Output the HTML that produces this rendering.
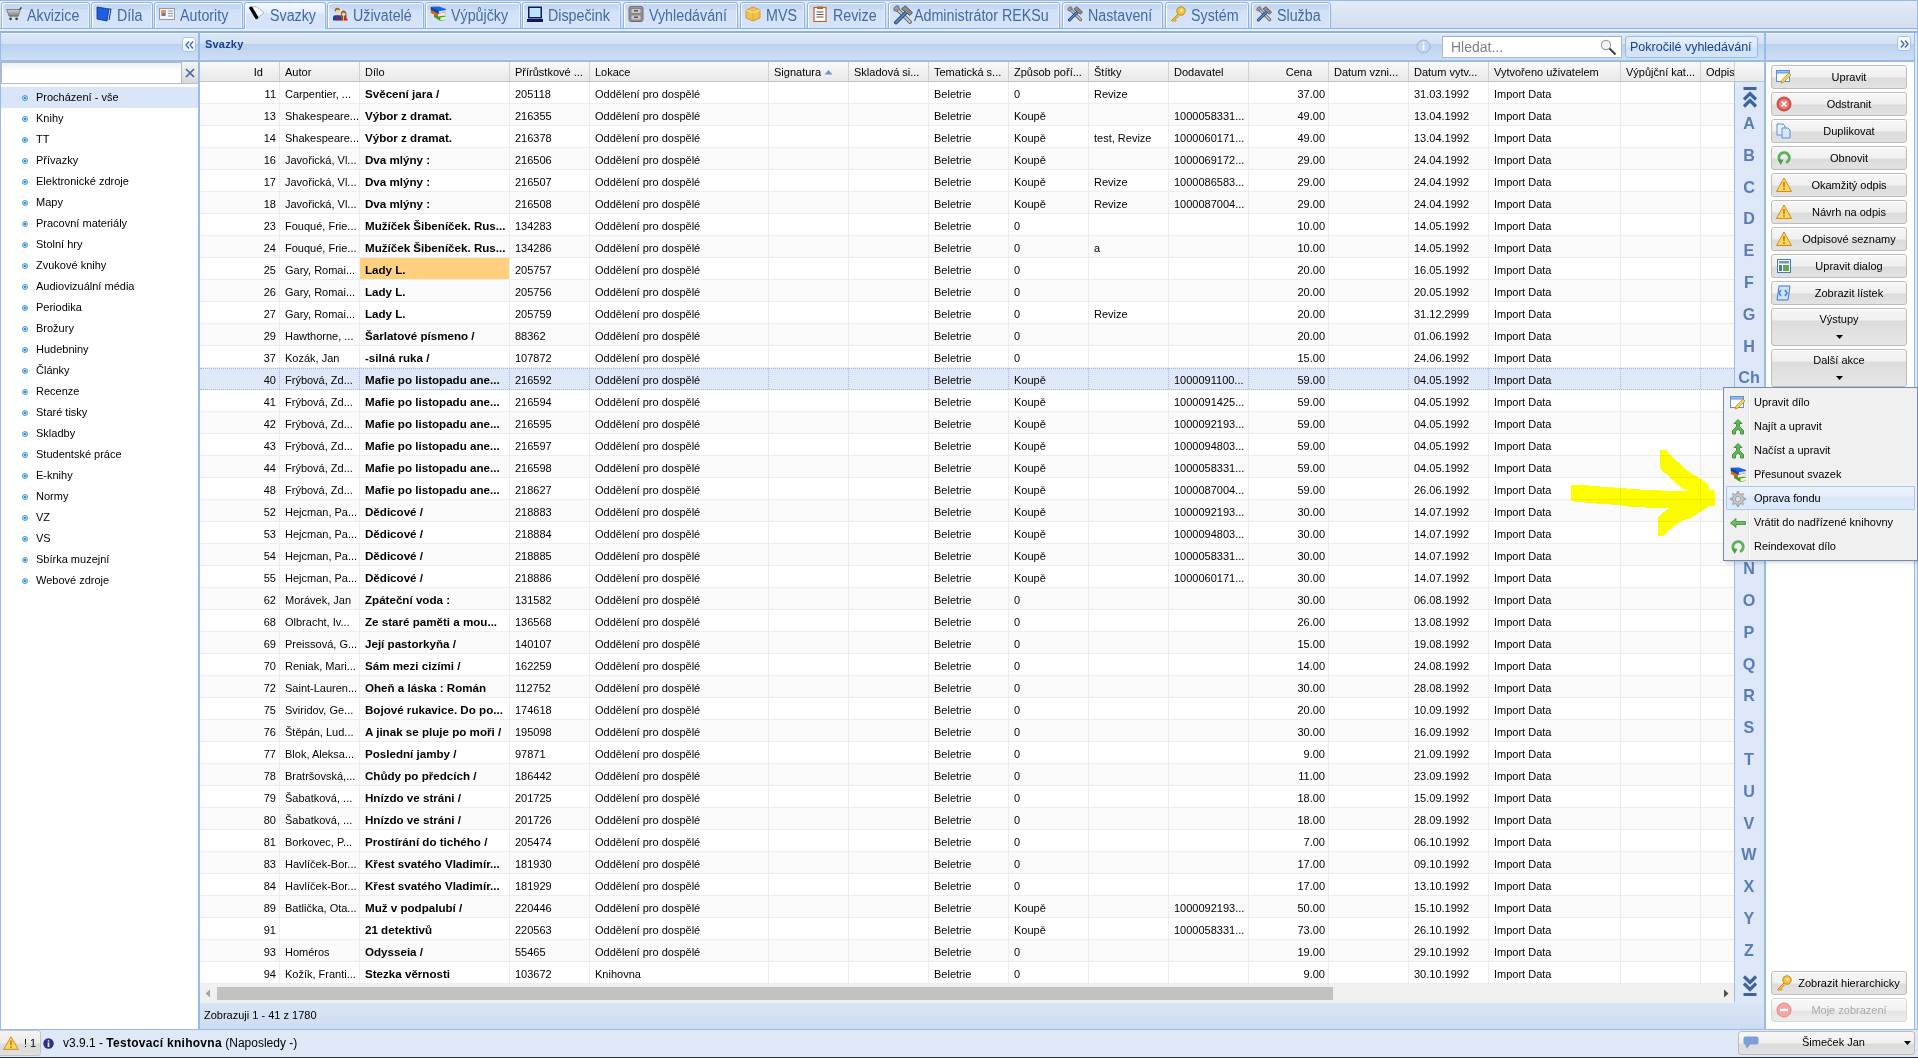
<!DOCTYPE html><html><head><meta charset="utf-8"><title>Svazky</title><style>
*{box-sizing:border-box}
html,body{margin:0;padding:0}
body{width:1918px;height:1058px;overflow:hidden;position:relative;background:#dfe8f6;font-family:"Liberation Sans",sans-serif;font-size:11px;color:#000}
.a{position:absolute}
.t{position:absolute;white-space:nowrap;line-height:13px}
/* tab bar */
#tabbar{left:0;top:0;width:1918px;height:31px;background:linear-gradient(#e3ebf7,#cfdcee);border-top:1px solid #99bbe8}
.tab{position:absolute;top:2px;height:27px;border:1px solid #8db2e3;border-radius:3px 3px 0 0;background:linear-gradient(#c3d6f1 0,#c7d9f2 6px,#d2e1f7 7px,#d6e4f9 100%);box-shadow:inset 1px 1px 0 #fff,inset -1px 0 0 #e9f1fc}
.tab.act{border-bottom:none;background:linear-gradient(#f4f8fe 0,#e3edfb 10px,#d6e4f9 11px,#d6e4f9 100%)}
.tab .tx{position:absolute;left:25px;top:4px;font-size:15.6px;line-height:18px;color:#416aa3;white-space:nowrap;transform:scaleX(0.915);transform-origin:0 0}
.tab svg{position:absolute;left:4px;top:3px}
#strip{left:0;top:28px;width:1918px;height:5px;background:#e6eefa;border-top:1px solid #8db2e3;border-bottom:2px solid #8db2e3}
/* panels */
.phdr{position:absolute;height:29px;border-top:1px solid #f3f7fc;border-bottom:2px solid #99bbe8;background:linear-gradient(#dce8f6 0,#d3e1f3 10px,#b3ccee 10px,#bcd2f0 11px,#cddff5 100%)}
.pborder{position:absolute;background:#99bbe8}
.gh{position:absolute;top:62px;height:20px;background:linear-gradient(#fafafa,#f0f0f0 50%,#e9e9e9);border-bottom:1px solid #c5c5c5}
.ghc{position:absolute;top:0;height:19px;border-right:1px solid #d0d0d0;padding:0 0 0 5px;line-height:21px;white-space:nowrap;overflow:hidden;color:#000}
.row{position:absolute;left:200px;width:1534px;height:22px;border-bottom:1px solid #ededed;background:#fff}
.row.alt{background:#fafafa}
.row.sel{background:#dfe8f6;border-top:1px dotted #a3bae9;border-bottom:1px dotted #a3bae9}
.c{position:absolute;top:0;height:21px;border-right:1px solid #ededed;line-height:24px;padding-left:5px;white-space:nowrap;overflow:hidden}
.row.sel .c{border-right:1px dotted #a3bae9;top:-1px}
.c.r{text-align:right;padding:0 3px 0 0}
.c.b{font-weight:bold;font-size:11.6px}
.btn{position:absolute;left:1771px;width:136px;height:24px;border:1px solid #bcbcbc;border-radius:3px;background:linear-gradient(#f6f6f6 0,#f0f0f0 11px,#dcdcdc 12px,#e2e2e2 100%);box-shadow:inset 0 1px 0 #fff}
.btn .bt{position:absolute;left:0;width:100%;text-align:center;top:5px;line-height:13px;padding-left:20px;white-space:nowrap}
.btn svg{position:absolute;left:4px;top:3px}
.tree{position:absolute;left:36px;line-height:13px;white-space:nowrap}
.bul{position:absolute;left:22px;width:6px;height:6px;border-radius:50%;background:radial-gradient(circle,#3f8fcf 0,#3f8fcf 1px,#b5dcf6 1.5px,#a8d5f4 2px);border:1px solid #4d9fd9}
.idx{position:absolute;left:1734px;width:30px;text-align:center;font-family:"Liberation Sans",sans-serif;font-weight:bold;font-size:17px;line-height:14px;color:#5a7db3;transform:scaleX(0.95)}
.mi{position:absolute;left:1754px;line-height:13px;white-space:nowrap}
.mico{position:absolute;left:1730px}
</style></head><body>
<div id="tabbar" class="a"></div>
<div id="strip" class="a"></div>
<div class="tab" style="left:1px;width:89px"><svg width="16" height="16" viewBox="0 0 16 16"><defs><linearGradient id="cg" x1="0" y1="0" x2="0" y2="1"><stop offset="0" stop-color="#d6d6d6"/><stop offset="1" stop-color="#7d7d7d"/></linearGradient></defs><path d="M0.5 3.5H14.2L12.2 10.2H3.2z" fill="url(#cg)" stroke="#6a6a6a" stroke-width="0.8"/><path d="M13.6 3.8L15.6 1.2" stroke="#555" stroke-width="1.6"/><circle cx="4.6" cy="12.8" r="1.4" fill="#444"/><circle cx="10.6" cy="12.8" r="1.4" fill="#444"/></svg><span class="tx">Akvizice</span></div>
<div class="tab" style="left:91px;width:62px"><svg width="16" height="16" viewBox="0 0 16 16"><path d="M1 1l12 2-2 12-10-2z" fill="#1d5fe0" stroke="#0a2f8a" stroke-width="0.8"/><path d="M13 3l2 0-2 11" fill="none" stroke="#0a2f8a" stroke-width="1"/></svg><span class="tx">Díla</span></div>
<div class="tab" style="left:154px;width:89px"><svg width="16" height="16" viewBox="0 0 16 16"><rect x="0.5" y="2.5" width="15" height="11" fill="#f4f4f4" stroke="#9a9a9a"/><rect x="2" y="4" width="5" height="6" fill="#e79a5c"/><rect x="3" y="7" width="3" height="3" fill="#4a7fc1"/><path d="M9 5h5M9 7.5h5M9 10h5" stroke="#7a9cc6" stroke-width="1.2"/></svg><span class="tx">Autority</span></div>
<div class="tab act" style="left:244px;width:82px"><svg width="16" height="16" viewBox="0 0 16 16"><path d="M3.5 0.7H7.5L15.3 6.5 7.8 12.6" fill="#f4f7fb" stroke="#8a8a8a" stroke-width="0.9" stroke-dasharray="1.2 0.8"/><path d="M2 2.2L7.6 11.4" stroke="#000" stroke-width="3.4" stroke-linecap="round"/></svg><span class="tx">Svazky</span></div>
<div class="tab" style="left:327px;width:97px"><svg width="16" height="16" viewBox="0 0 16 16"><path d="M1 14.5V11.5Q1 9.2 3.2 9.2H7.8Q9.2 9.5 9.4 11.5V14.5z" fill="#1242b0"/><path d="M4.6 9.2h1.1l.3 5.3H4.3z" fill="#c21b1b"/><circle cx="5.2" cy="5.6" r="2.3" fill="#f5d7a6"/><path d="M2.6 5.2Q2.4 1.6 5.4 1.7 8.4 1.9 7.9 5 7.2 3.6 5.6 3.8 4 3.9 3.4 5.6z" fill="#9b6a1d"/><path d="M8.6 14.5L9.2 12.2Q9.8 11 11.5 11 13.6 11 15.6 13.2V14.5z" fill="#d21f1f"/><path d="M8.7 12.2Q8.1 4.6 11.6 4.6 15.1 4.6 14.5 12.2z" fill="#8c5a16"/><circle cx="11.6" cy="8.3" r="1.8" fill="#f5d7a6"/><path d="M11.2 10h.8v4.5h-.8z" fill="#f5d7a6"/></svg><span class="tx">Uživatelé</span></div>
<div class="tab" style="left:425px;width:96px"><svg width="16" height="16" viewBox="0 0 16 16"><path d="M4 8.2L17 10.2V13.6L10.4 15 4 11z" fill="#3f9f1f"/><path d="M10.4 11.4L16.6 10.4V13.4L10.4 14.6z" fill="#e4f6d2"/><path d="M0.8 4L15.2 5.6V9.2L8 10.6 0.8 7z" fill="#e2620d"/><path d="M8 7.6L15 6.6V9.4L8 10.5z" fill="#fde4d0"/><path d="M0.8 0.8L9 0.6 16.2 3V5.4L8.6 7.8 0.8 3.8z" fill="#1b62dc"/><path d="M8.6 5.2L16 4V6L8.6 7.6z" fill="#c6ddff"/><path d="M0.8 0.8L8.6 5.2V7.8L0.8 3.8z" fill="#0f46a8"/></svg><span class="tx">Výpůjčky</span></div>
<div class="tab" style="left:522px;width:99px"><svg width="16" height="16" viewBox="0 0 16 16"><rect x="1" y="0.5" width="14" height="12" fill="#0d1a5e"/><rect x="2.5" y="2" width="11" height="9" fill="#bfe3fb"/><rect x="0" y="13" width="16" height="3" fill="#0d1a5e"/></svg><span class="tx">Dispečink</span></div>
<div class="tab" style="left:623px;width:115px"><svg width="16" height="16" viewBox="0 0 16 16"><rect x="1" y="0.5" width="14" height="15" rx="2" fill="#9d9d9d" stroke="#6f6f6f"/><rect x="3" y="2.5" width="10" height="5" fill="#c9c9c9" stroke="#6f6f6f" stroke-width="0.7"/><rect x="3" y="9" width="10" height="5" fill="#c9c9c9" stroke="#6f6f6f" stroke-width="0.7"/><rect x="6" y="4" width="4" height="1.5" fill="#555"/><rect x="6" y="10.5" width="4" height="1.5" fill="#555"/></svg><span class="tx">Vyhledávání</span></div>
<div class="tab" style="left:740px;width:65px"><svg width="16" height="16" viewBox="0 0 16 16"><path d="M8 1l7 3v8l-7 3-7-3V4z" fill="#f1c24a" stroke="#c98d16" stroke-width="0.8"/><path d="M1 4l7 3 7-3" fill="none" stroke="#fbe7a8" stroke-width="1"/><path d="M8 7v8" stroke="#d9a22a" stroke-width="0.8"/></svg><span class="tx">MVS</span></div>
<div class="tab" style="left:807px;width:79px"><svg width="16" height="16" viewBox="0 0 16 16"><rect x="2" y="1.5" width="12" height="14" fill="#fff" stroke="#c0602a" stroke-width="1.2"/><rect x="5" y="0.5" width="6" height="2.5" fill="#c0602a"/><path d="M4.5 6h7M4.5 8.5h7M4.5 11h7" stroke="#555" stroke-width="1"/></svg><span class="tx">Revize</span></div>
<div class="tab" style="left:888px;width:172px"><svg width="20" height="20" viewBox="0 0 20 20" style="top:2px;left:4px"><path d="M5 5L17 17" stroke="#5e5e5e" stroke-width="3.8" stroke-linecap="round"/><path d="M5 5L17 17" stroke="#c9c9c9" stroke-width="1.8" stroke-linecap="round"/><path d="M0.8 5.2A4.5 4.5 0 0 1 5.2 0.8L6.5 3.6 3.6 6.5z" fill="#9a9a9a" stroke="#5e5e5e" stroke-width="0.8"/><path d="M14 6.5L3 17.5" stroke="#1f3f73" stroke-width="3.8" stroke-linecap="round"/><path d="M14 6.5L3 17.5" stroke="#5a8ccc" stroke-width="1.8" stroke-linecap="round"/><path d="M8.5 4L12.2 0.8 19.5 7.6 16.8 10.4z" fill="#8a8a8a" stroke="#3f3f3f" stroke-width="0.8"/></svg><span class="tx">Administrátor REKSu</span></div>
<div class="tab" style="left:1062px;width:101px"><svg width="16" height="16" viewBox="0 0 20 20"><path d="M5 5L17 17" stroke="#5e5e5e" stroke-width="3.8" stroke-linecap="round"/><path d="M5 5L17 17" stroke="#c9c9c9" stroke-width="1.8" stroke-linecap="round"/><path d="M0.8 5.2A4.5 4.5 0 0 1 5.2 0.8L6.5 3.6 3.6 6.5z" fill="#9a9a9a" stroke="#5e5e5e" stroke-width="0.8"/><path d="M14 6.5L3 17.5" stroke="#1f3f73" stroke-width="3.8" stroke-linecap="round"/><path d="M14 6.5L3 17.5" stroke="#5a8ccc" stroke-width="1.8" stroke-linecap="round"/><path d="M8.5 4L12.2 0.8 19.5 7.6 16.8 10.4z" fill="#8a8a8a" stroke="#3f3f3f" stroke-width="0.8"/><path d="M14.5 3.5l2 2" stroke="#c33" stroke-width="1"/></svg><span class="tx">Nastavení</span></div>
<div class="tab" style="left:1165px;width:84px"><svg width="16" height="16" viewBox="0 0 16 16"><circle cx="11" cy="5" r="4.2" fill="#f3c543" stroke="#c48a10" stroke-width="1"/><circle cx="11.5" cy="4.5" r="1.2" fill="#fff6c8"/><path d="M8 8L1.5 14.5l1.5 1 1-1 1 1 1.2-1.2-1-1 3.5-3.5" fill="#f3c543" stroke="#c48a10" stroke-width="1"/></svg><span class="tx">Systém</span></div>
<div class="tab" style="left:1251px;width:80px"><svg width="16" height="16" viewBox="0 0 20 20"><path d="M5 5L17 17" stroke="#5e5e5e" stroke-width="3.8" stroke-linecap="round"/><path d="M5 5L17 17" stroke="#c9c9c9" stroke-width="1.8" stroke-linecap="round"/><path d="M0.8 5.2A4.5 4.5 0 0 1 5.2 0.8L6.5 3.6 3.6 6.5z" fill="#9a9a9a" stroke="#5e5e5e" stroke-width="0.8"/><path d="M14 6.5L3 17.5" stroke="#1f3f73" stroke-width="3.8" stroke-linecap="round"/><path d="M14 6.5L3 17.5" stroke="#5a8ccc" stroke-width="1.8" stroke-linecap="round"/><path d="M8.5 4L12.2 0.8 19.5 7.6 16.8 10.4z" fill="#8a8a8a" stroke="#3f3f3f" stroke-width="0.8"/><path d="M14.5 3.5l2 2" stroke="#c33" stroke-width="1"/></svg><span class="tx">Služba</span></div>
<div class="pborder" style="left:0;top:33px;width:1px;height:997px"></div>
<div class="pborder" style="left:198px;top:33px;width:2px;height:997px"></div>
<div class="pborder" style="left:1764px;top:33px;width:2px;height:997px"></div>
<div class="pborder" style="left:1914px;top:33px;width:1px;height:997px"></div>
<div class="pborder" style="left:0;top:1029px;width:1918px;height:1px"></div>
<div class="pborder" style="left:1917px;top:0;width:1px;height:1030px"></div>
<div class="pborder" style="left:0;top:31px;width:1px;height:999px"></div>
<div class="phdr" style="left:1px;top:33px;width:197px"></div>
<div class="phdr" style="left:200px;top:33px;width:1564px"></div>
<div class="phdr" style="left:1766px;top:33px;width:148px"></div>
<div class="a" style="left:1px;top:62px;width:197px;height:967px;background:#fff"></div>
<div class="a" style="left:1766px;top:62px;width:148px;height:967px;background:#fff"></div>
<div class="a" style="left:182px;top:37px;width:14px;height:15px;border:1px solid #a6c3ea;border-radius:3px;background:linear-gradient(#fff,#e8f0fb)"><svg class="a" style="left:1px;top:2px" width="11" height="10" viewBox="0 0 11 10"><path d="M5 1.5L2 5l3 3.5M9 1.5L6 5l3 3.5" fill="none" stroke="#3d66a6" stroke-width="1.3"/></svg></div>
<div class="a" style="left:1897px;top:36px;width:14px;height:15px;border:1px solid #a6c3ea;border-radius:3px;background:linear-gradient(#fff,#e8f0fb)"><svg class="a" style="left:1px;top:2px" width="11" height="10" viewBox="0 0 11 10"><path d="M2 1.5L5 5 2 8.5M6 1.5L9 5 6 8.5" fill="none" stroke="#3d66a6" stroke-width="1.3"/></svg></div>
<div class="t" style="left:205px;top:38px;font-weight:bold;color:#15428b;font-size:11px;letter-spacing:0.2px">Svazky</div>
<svg class="a" style="left:1416px;top:39px" width="15" height="15" viewBox="0 0 15 15"><circle cx="7.5" cy="7.5" r="6.5" fill="#c6d6ec" stroke="#9fb6d8" stroke-width="1"/><rect x="6.6" y="6" width="1.8" height="5" fill="#fff"/><circle cx="7.5" cy="4" r="1" fill="#fff"/></svg>
<div class="a" style="left:1442px;top:36px;width:180px;height:22px;background:#fff;border:1px solid #b5b8c8;border-top-color:#a9acbb"></div>
<div class="t" style="left:1451px;top:39px;font-size:14px;line-height:16px;color:#808080">Hledat...</div>
<svg class="a" style="left:1600px;top:39px" width="17" height="17" viewBox="0 0 17 17"><circle cx="6" cy="6" r="4.6" fill="#f4f6f8" stroke="#9a9a9a" stroke-width="1.1"/><path d="M9.5 9.5l6 6" stroke="#444" stroke-width="2.2"/></svg>
<div class="a" style="left:1625px;top:36px;width:133px;height:22px;border:1px solid #99bbe8;border-radius:3px;background:linear-gradient(#e6f0fc 0,#dbe8f9 10px,#cfe0f6 11px,#d6e5f8 100%)"></div>
<div class="t" style="left:1630px;top:40px;font-size:12.5px;line-height:15px;color:#15428b">Pokročilé vyhledávání</div>
<div class="a" style="left:1px;top:62px;width:181px;height:22px;background:linear-gradient(#eef0f0,#fff 8px);border:1px solid #b5b8c8"></div>
<div class="a" style="left:182px;top:62px;width:16px;height:22px;background:linear-gradient(#f5f5f5 0,#e8e8e8 50%,#d8d8d8 100%);border-bottom:1px solid #c0c0c0"><svg class="a" style="left:3px;top:6px" width="10" height="10" viewBox="0 0 10 10"><path d="M1 1l8 8M9 1l-8 8" stroke="#3d66a6" stroke-width="1.6"/></svg></div>
<div class="a" style="left:1px;top:87px;width:197px;height:21px;background:#dae6f7"></div>
<div class="bul" style="top:95px"></div><div class="tree" style="top:91px">Procházení - vše</div>
<div class="bul" style="top:116px"></div><div class="tree" style="top:112px">Knihy</div>
<div class="bul" style="top:137px"></div><div class="tree" style="top:133px">TT</div>
<div class="bul" style="top:158px"></div><div class="tree" style="top:154px">Přívazky</div>
<div class="bul" style="top:179px"></div><div class="tree" style="top:175px">Elektronické zdroje</div>
<div class="bul" style="top:200px"></div><div class="tree" style="top:196px">Mapy</div>
<div class="bul" style="top:221px"></div><div class="tree" style="top:217px">Pracovní materiály</div>
<div class="bul" style="top:242px"></div><div class="tree" style="top:238px">Stolní hry</div>
<div class="bul" style="top:263px"></div><div class="tree" style="top:259px">Zvukové knihy</div>
<div class="bul" style="top:284px"></div><div class="tree" style="top:280px">Audiovizuální média</div>
<div class="bul" style="top:305px"></div><div class="tree" style="top:301px">Periodika</div>
<div class="bul" style="top:326px"></div><div class="tree" style="top:322px">Brožury</div>
<div class="bul" style="top:347px"></div><div class="tree" style="top:343px">Hudebniny</div>
<div class="bul" style="top:368px"></div><div class="tree" style="top:364px">Články</div>
<div class="bul" style="top:389px"></div><div class="tree" style="top:385px">Recenze</div>
<div class="bul" style="top:410px"></div><div class="tree" style="top:406px">Staré tisky</div>
<div class="bul" style="top:431px"></div><div class="tree" style="top:427px">Skladby</div>
<div class="bul" style="top:452px"></div><div class="tree" style="top:448px">Studentské práce</div>
<div class="bul" style="top:473px"></div><div class="tree" style="top:469px">E-knihy</div>
<div class="bul" style="top:494px"></div><div class="tree" style="top:490px">Normy</div>
<div class="bul" style="top:515px"></div><div class="tree" style="top:511px">VZ</div>
<div class="bul" style="top:536px"></div><div class="tree" style="top:532px">VS</div>
<div class="bul" style="top:557px"></div><div class="tree" style="top:553px">Sbírka muzejní</div>
<div class="bul" style="top:578px"></div><div class="tree" style="top:574px">Webové zdroje</div>
<div class="gh" style="left:200px;width:1564px">
<div class="ghc" style="left:0px;width:80px;text-align:right;padding:0 16px 0 0;">Id</div>
<div class="ghc" style="left:80px;width:80px;">Autor</div>
<div class="ghc" style="left:160px;width:150px;">Dílo</div>
<div class="ghc" style="left:310px;width:80px;">Přírůstkové ...</div>
<div class="ghc" style="left:390px;width:179px;">Lokace</div>
<div class="ghc" style="left:569px;width:80px;">Signatura<svg class="a" style="left:55px;top:7px" width="9" height="6" viewBox="0 0 9 6"><path d="M0.5 5.5L4.5 1l4 4.5z" fill="#6f95c8"/></svg></div>
<div class="ghc" style="left:649px;width:80px;">Skladová si...</div>
<div class="ghc" style="left:729px;width:80px;">Tematická s...</div>
<div class="ghc" style="left:809px;width:80px;">Způsob poří...</div>
<div class="ghc" style="left:889px;width:80px;">Štítky</div>
<div class="ghc" style="left:969px;width:80px;">Dodavatel</div>
<div class="ghc" style="left:1049px;width:80px;text-align:right;padding:0 16px 0 0;">Cena</div>
<div class="ghc" style="left:1129px;width:80px;">Datum vzni...</div>
<div class="ghc" style="left:1209px;width:80px;">Datum vytv...</div>
<div class="ghc" style="left:1289px;width:132px;">Vytvořeno uživatelem</div>
<div class="ghc" style="left:1421px;width:80px;">Výpůjční kat...</div>
<div class="ghc" style="left:1501px;width:34px;">Odpis</div>
</div>
<div class="row" style="top:82px">
<div class="c r" style="left:0px;width:80px;">11</div>
<div class="c" style="left:80px;width:80px;">Carpentier, ...</div>
<div class="c b" style="left:160px;width:150px;">Svěcení jara /</div>
<div class="c" style="left:310px;width:80px;">205118</div>
<div class="c" style="left:390px;width:179px;">Oddělení pro dospělé</div>
<div class="c" style="left:569px;width:80px;"></div>
<div class="c" style="left:649px;width:80px;"></div>
<div class="c" style="left:729px;width:80px;">Beletrie</div>
<div class="c" style="left:809px;width:80px;">0</div>
<div class="c" style="left:889px;width:80px;">Revize</div>
<div class="c" style="left:969px;width:80px;"></div>
<div class="c r" style="left:1049px;width:80px;">37.00</div>
<div class="c" style="left:1129px;width:80px;"></div>
<div class="c" style="left:1209px;width:80px;">31.03.1992</div>
<div class="c" style="left:1289px;width:132px;">Import Data</div>
<div class="c" style="left:1421px;width:80px;"></div>
<div class="c" style="left:1501px;width:34px;"></div>
</div>
<div class="row alt" style="top:104px">
<div class="c r" style="left:0px;width:80px;">13</div>
<div class="c" style="left:80px;width:80px;">Shakespeare...</div>
<div class="c b" style="left:160px;width:150px;">Výbor z dramat.</div>
<div class="c" style="left:310px;width:80px;">216355</div>
<div class="c" style="left:390px;width:179px;">Oddělení pro dospělé</div>
<div class="c" style="left:569px;width:80px;"></div>
<div class="c" style="left:649px;width:80px;"></div>
<div class="c" style="left:729px;width:80px;">Beletrie</div>
<div class="c" style="left:809px;width:80px;">Koupě</div>
<div class="c" style="left:889px;width:80px;"></div>
<div class="c" style="left:969px;width:80px;">1000058331...</div>
<div class="c r" style="left:1049px;width:80px;">49.00</div>
<div class="c" style="left:1129px;width:80px;"></div>
<div class="c" style="left:1209px;width:80px;">13.04.1992</div>
<div class="c" style="left:1289px;width:132px;">Import Data</div>
<div class="c" style="left:1421px;width:80px;"></div>
<div class="c" style="left:1501px;width:34px;"></div>
</div>
<div class="row" style="top:126px">
<div class="c r" style="left:0px;width:80px;">14</div>
<div class="c" style="left:80px;width:80px;">Shakespeare...</div>
<div class="c b" style="left:160px;width:150px;">Výbor z dramat.</div>
<div class="c" style="left:310px;width:80px;">216378</div>
<div class="c" style="left:390px;width:179px;">Oddělení pro dospělé</div>
<div class="c" style="left:569px;width:80px;"></div>
<div class="c" style="left:649px;width:80px;"></div>
<div class="c" style="left:729px;width:80px;">Beletrie</div>
<div class="c" style="left:809px;width:80px;">Koupě</div>
<div class="c" style="left:889px;width:80px;">test, Revize</div>
<div class="c" style="left:969px;width:80px;">1000060171...</div>
<div class="c r" style="left:1049px;width:80px;">49.00</div>
<div class="c" style="left:1129px;width:80px;"></div>
<div class="c" style="left:1209px;width:80px;">13.04.1992</div>
<div class="c" style="left:1289px;width:132px;">Import Data</div>
<div class="c" style="left:1421px;width:80px;"></div>
<div class="c" style="left:1501px;width:34px;"></div>
</div>
<div class="row alt" style="top:148px">
<div class="c r" style="left:0px;width:80px;">16</div>
<div class="c" style="left:80px;width:80px;">Javořická, Vl...</div>
<div class="c b" style="left:160px;width:150px;">Dva mlýny :</div>
<div class="c" style="left:310px;width:80px;">216506</div>
<div class="c" style="left:390px;width:179px;">Oddělení pro dospělé</div>
<div class="c" style="left:569px;width:80px;"></div>
<div class="c" style="left:649px;width:80px;"></div>
<div class="c" style="left:729px;width:80px;">Beletrie</div>
<div class="c" style="left:809px;width:80px;">Koupě</div>
<div class="c" style="left:889px;width:80px;"></div>
<div class="c" style="left:969px;width:80px;">1000069172...</div>
<div class="c r" style="left:1049px;width:80px;">29.00</div>
<div class="c" style="left:1129px;width:80px;"></div>
<div class="c" style="left:1209px;width:80px;">24.04.1992</div>
<div class="c" style="left:1289px;width:132px;">Import Data</div>
<div class="c" style="left:1421px;width:80px;"></div>
<div class="c" style="left:1501px;width:34px;"></div>
</div>
<div class="row" style="top:170px">
<div class="c r" style="left:0px;width:80px;">17</div>
<div class="c" style="left:80px;width:80px;">Javořická, Vl...</div>
<div class="c b" style="left:160px;width:150px;">Dva mlýny :</div>
<div class="c" style="left:310px;width:80px;">216507</div>
<div class="c" style="left:390px;width:179px;">Oddělení pro dospělé</div>
<div class="c" style="left:569px;width:80px;"></div>
<div class="c" style="left:649px;width:80px;"></div>
<div class="c" style="left:729px;width:80px;">Beletrie</div>
<div class="c" style="left:809px;width:80px;">Koupě</div>
<div class="c" style="left:889px;width:80px;">Revize</div>
<div class="c" style="left:969px;width:80px;">1000086583...</div>
<div class="c r" style="left:1049px;width:80px;">29.00</div>
<div class="c" style="left:1129px;width:80px;"></div>
<div class="c" style="left:1209px;width:80px;">24.04.1992</div>
<div class="c" style="left:1289px;width:132px;">Import Data</div>
<div class="c" style="left:1421px;width:80px;"></div>
<div class="c" style="left:1501px;width:34px;"></div>
</div>
<div class="row alt" style="top:192px">
<div class="c r" style="left:0px;width:80px;">18</div>
<div class="c" style="left:80px;width:80px;">Javořická, Vl...</div>
<div class="c b" style="left:160px;width:150px;">Dva mlýny :</div>
<div class="c" style="left:310px;width:80px;">216508</div>
<div class="c" style="left:390px;width:179px;">Oddělení pro dospělé</div>
<div class="c" style="left:569px;width:80px;"></div>
<div class="c" style="left:649px;width:80px;"></div>
<div class="c" style="left:729px;width:80px;">Beletrie</div>
<div class="c" style="left:809px;width:80px;">Koupě</div>
<div class="c" style="left:889px;width:80px;">Revize</div>
<div class="c" style="left:969px;width:80px;">1000087004...</div>
<div class="c r" style="left:1049px;width:80px;">29.00</div>
<div class="c" style="left:1129px;width:80px;"></div>
<div class="c" style="left:1209px;width:80px;">24.04.1992</div>
<div class="c" style="left:1289px;width:132px;">Import Data</div>
<div class="c" style="left:1421px;width:80px;"></div>
<div class="c" style="left:1501px;width:34px;"></div>
</div>
<div class="row" style="top:214px">
<div class="c r" style="left:0px;width:80px;">23</div>
<div class="c" style="left:80px;width:80px;">Fouqué, Frie...</div>
<div class="c b" style="left:160px;width:150px;">Mužíček Šibeníček. Rus...</div>
<div class="c" style="left:310px;width:80px;">134283</div>
<div class="c" style="left:390px;width:179px;">Oddělení pro dospělé</div>
<div class="c" style="left:569px;width:80px;"></div>
<div class="c" style="left:649px;width:80px;"></div>
<div class="c" style="left:729px;width:80px;">Beletrie</div>
<div class="c" style="left:809px;width:80px;">0</div>
<div class="c" style="left:889px;width:80px;"></div>
<div class="c" style="left:969px;width:80px;"></div>
<div class="c r" style="left:1049px;width:80px;">10.00</div>
<div class="c" style="left:1129px;width:80px;"></div>
<div class="c" style="left:1209px;width:80px;">14.05.1992</div>
<div class="c" style="left:1289px;width:132px;">Import Data</div>
<div class="c" style="left:1421px;width:80px;"></div>
<div class="c" style="left:1501px;width:34px;"></div>
</div>
<div class="row alt" style="top:236px">
<div class="c r" style="left:0px;width:80px;">24</div>
<div class="c" style="left:80px;width:80px;">Fouqué, Frie...</div>
<div class="c b" style="left:160px;width:150px;">Mužíček Šibeníček. Rus...</div>
<div class="c" style="left:310px;width:80px;">134286</div>
<div class="c" style="left:390px;width:179px;">Oddělení pro dospělé</div>
<div class="c" style="left:569px;width:80px;"></div>
<div class="c" style="left:649px;width:80px;"></div>
<div class="c" style="left:729px;width:80px;">Beletrie</div>
<div class="c" style="left:809px;width:80px;">0</div>
<div class="c" style="left:889px;width:80px;">a</div>
<div class="c" style="left:969px;width:80px;"></div>
<div class="c r" style="left:1049px;width:80px;">10.00</div>
<div class="c" style="left:1129px;width:80px;"></div>
<div class="c" style="left:1209px;width:80px;">14.05.1992</div>
<div class="c" style="left:1289px;width:132px;">Import Data</div>
<div class="c" style="left:1421px;width:80px;"></div>
<div class="c" style="left:1501px;width:34px;"></div>
</div>
<div class="row" style="top:258px">
<div class="c r" style="left:0px;width:80px;">25</div>
<div class="c" style="left:80px;width:80px;">Gary, Romai...</div>
<div class="c b" style="left:160px;width:150px;background:#ffd17f;">Lady L.</div>
<div class="c" style="left:310px;width:80px;">205757</div>
<div class="c" style="left:390px;width:179px;">Oddělení pro dospělé</div>
<div class="c" style="left:569px;width:80px;"></div>
<div class="c" style="left:649px;width:80px;"></div>
<div class="c" style="left:729px;width:80px;">Beletrie</div>
<div class="c" style="left:809px;width:80px;">0</div>
<div class="c" style="left:889px;width:80px;"></div>
<div class="c" style="left:969px;width:80px;"></div>
<div class="c r" style="left:1049px;width:80px;">20.00</div>
<div class="c" style="left:1129px;width:80px;"></div>
<div class="c" style="left:1209px;width:80px;">16.05.1992</div>
<div class="c" style="left:1289px;width:132px;">Import Data</div>
<div class="c" style="left:1421px;width:80px;"></div>
<div class="c" style="left:1501px;width:34px;"></div>
</div>
<div class="row alt" style="top:280px">
<div class="c r" style="left:0px;width:80px;">26</div>
<div class="c" style="left:80px;width:80px;">Gary, Romai...</div>
<div class="c b" style="left:160px;width:150px;">Lady L.</div>
<div class="c" style="left:310px;width:80px;">205756</div>
<div class="c" style="left:390px;width:179px;">Oddělení pro dospělé</div>
<div class="c" style="left:569px;width:80px;"></div>
<div class="c" style="left:649px;width:80px;"></div>
<div class="c" style="left:729px;width:80px;">Beletrie</div>
<div class="c" style="left:809px;width:80px;">0</div>
<div class="c" style="left:889px;width:80px;"></div>
<div class="c" style="left:969px;width:80px;"></div>
<div class="c r" style="left:1049px;width:80px;">20.00</div>
<div class="c" style="left:1129px;width:80px;"></div>
<div class="c" style="left:1209px;width:80px;">20.05.1992</div>
<div class="c" style="left:1289px;width:132px;">Import Data</div>
<div class="c" style="left:1421px;width:80px;"></div>
<div class="c" style="left:1501px;width:34px;"></div>
</div>
<div class="row" style="top:302px">
<div class="c r" style="left:0px;width:80px;">27</div>
<div class="c" style="left:80px;width:80px;">Gary, Romai...</div>
<div class="c b" style="left:160px;width:150px;">Lady L.</div>
<div class="c" style="left:310px;width:80px;">205759</div>
<div class="c" style="left:390px;width:179px;">Oddělení pro dospělé</div>
<div class="c" style="left:569px;width:80px;"></div>
<div class="c" style="left:649px;width:80px;"></div>
<div class="c" style="left:729px;width:80px;">Beletrie</div>
<div class="c" style="left:809px;width:80px;">0</div>
<div class="c" style="left:889px;width:80px;">Revize</div>
<div class="c" style="left:969px;width:80px;"></div>
<div class="c r" style="left:1049px;width:80px;">20.00</div>
<div class="c" style="left:1129px;width:80px;"></div>
<div class="c" style="left:1209px;width:80px;">31.12.2999</div>
<div class="c" style="left:1289px;width:132px;">Import Data</div>
<div class="c" style="left:1421px;width:80px;"></div>
<div class="c" style="left:1501px;width:34px;"></div>
</div>
<div class="row alt" style="top:324px">
<div class="c r" style="left:0px;width:80px;">29</div>
<div class="c" style="left:80px;width:80px;">Hawthorne, ...</div>
<div class="c b" style="left:160px;width:150px;">Šarlatové písmeno /</div>
<div class="c" style="left:310px;width:80px;">88362</div>
<div class="c" style="left:390px;width:179px;">Oddělení pro dospělé</div>
<div class="c" style="left:569px;width:80px;"></div>
<div class="c" style="left:649px;width:80px;"></div>
<div class="c" style="left:729px;width:80px;">Beletrie</div>
<div class="c" style="left:809px;width:80px;">0</div>
<div class="c" style="left:889px;width:80px;"></div>
<div class="c" style="left:969px;width:80px;"></div>
<div class="c r" style="left:1049px;width:80px;">20.00</div>
<div class="c" style="left:1129px;width:80px;"></div>
<div class="c" style="left:1209px;width:80px;">01.06.1992</div>
<div class="c" style="left:1289px;width:132px;">Import Data</div>
<div class="c" style="left:1421px;width:80px;"></div>
<div class="c" style="left:1501px;width:34px;"></div>
</div>
<div class="row" style="top:346px">
<div class="c r" style="left:0px;width:80px;">37</div>
<div class="c" style="left:80px;width:80px;">Kozák, Jan</div>
<div class="c b" style="left:160px;width:150px;">-silná ruka /</div>
<div class="c" style="left:310px;width:80px;">107872</div>
<div class="c" style="left:390px;width:179px;">Oddělení pro dospělé</div>
<div class="c" style="left:569px;width:80px;"></div>
<div class="c" style="left:649px;width:80px;"></div>
<div class="c" style="left:729px;width:80px;">Beletrie</div>
<div class="c" style="left:809px;width:80px;">0</div>
<div class="c" style="left:889px;width:80px;"></div>
<div class="c" style="left:969px;width:80px;"></div>
<div class="c r" style="left:1049px;width:80px;">15.00</div>
<div class="c" style="left:1129px;width:80px;"></div>
<div class="c" style="left:1209px;width:80px;">24.06.1992</div>
<div class="c" style="left:1289px;width:132px;">Import Data</div>
<div class="c" style="left:1421px;width:80px;"></div>
<div class="c" style="left:1501px;width:34px;"></div>
</div>
<div class="row alt sel" style="top:368px">
<div class="c r" style="left:0px;width:80px;">40</div>
<div class="c" style="left:80px;width:80px;">Frýbová, Zd...</div>
<div class="c b" style="left:160px;width:150px;">Mafie po listopadu ane...</div>
<div class="c" style="left:310px;width:80px;">216592</div>
<div class="c" style="left:390px;width:179px;">Oddělení pro dospělé</div>
<div class="c" style="left:569px;width:80px;"></div>
<div class="c" style="left:649px;width:80px;"></div>
<div class="c" style="left:729px;width:80px;">Beletrie</div>
<div class="c" style="left:809px;width:80px;">Koupě</div>
<div class="c" style="left:889px;width:80px;"></div>
<div class="c" style="left:969px;width:80px;">1000091100...</div>
<div class="c r" style="left:1049px;width:80px;">59.00</div>
<div class="c" style="left:1129px;width:80px;"></div>
<div class="c" style="left:1209px;width:80px;">04.05.1992</div>
<div class="c" style="left:1289px;width:132px;">Import Data</div>
<div class="c" style="left:1421px;width:80px;"></div>
<div class="c" style="left:1501px;width:34px;"></div>
</div>
<div class="row" style="top:390px">
<div class="c r" style="left:0px;width:80px;">41</div>
<div class="c" style="left:80px;width:80px;">Frýbová, Zd...</div>
<div class="c b" style="left:160px;width:150px;">Mafie po listopadu ane...</div>
<div class="c" style="left:310px;width:80px;">216594</div>
<div class="c" style="left:390px;width:179px;">Oddělení pro dospělé</div>
<div class="c" style="left:569px;width:80px;"></div>
<div class="c" style="left:649px;width:80px;"></div>
<div class="c" style="left:729px;width:80px;">Beletrie</div>
<div class="c" style="left:809px;width:80px;">Koupě</div>
<div class="c" style="left:889px;width:80px;"></div>
<div class="c" style="left:969px;width:80px;">1000091425...</div>
<div class="c r" style="left:1049px;width:80px;">59.00</div>
<div class="c" style="left:1129px;width:80px;"></div>
<div class="c" style="left:1209px;width:80px;">04.05.1992</div>
<div class="c" style="left:1289px;width:132px;">Import Data</div>
<div class="c" style="left:1421px;width:80px;"></div>
<div class="c" style="left:1501px;width:34px;"></div>
</div>
<div class="row alt" style="top:412px">
<div class="c r" style="left:0px;width:80px;">42</div>
<div class="c" style="left:80px;width:80px;">Frýbová, Zd...</div>
<div class="c b" style="left:160px;width:150px;">Mafie po listopadu ane...</div>
<div class="c" style="left:310px;width:80px;">216595</div>
<div class="c" style="left:390px;width:179px;">Oddělení pro dospělé</div>
<div class="c" style="left:569px;width:80px;"></div>
<div class="c" style="left:649px;width:80px;"></div>
<div class="c" style="left:729px;width:80px;">Beletrie</div>
<div class="c" style="left:809px;width:80px;">Koupě</div>
<div class="c" style="left:889px;width:80px;"></div>
<div class="c" style="left:969px;width:80px;">1000092193...</div>
<div class="c r" style="left:1049px;width:80px;">59.00</div>
<div class="c" style="left:1129px;width:80px;"></div>
<div class="c" style="left:1209px;width:80px;">04.05.1992</div>
<div class="c" style="left:1289px;width:132px;">Import Data</div>
<div class="c" style="left:1421px;width:80px;"></div>
<div class="c" style="left:1501px;width:34px;"></div>
</div>
<div class="row" style="top:434px">
<div class="c r" style="left:0px;width:80px;">43</div>
<div class="c" style="left:80px;width:80px;">Frýbová, Zd...</div>
<div class="c b" style="left:160px;width:150px;">Mafie po listopadu ane...</div>
<div class="c" style="left:310px;width:80px;">216597</div>
<div class="c" style="left:390px;width:179px;">Oddělení pro dospělé</div>
<div class="c" style="left:569px;width:80px;"></div>
<div class="c" style="left:649px;width:80px;"></div>
<div class="c" style="left:729px;width:80px;">Beletrie</div>
<div class="c" style="left:809px;width:80px;">Koupě</div>
<div class="c" style="left:889px;width:80px;"></div>
<div class="c" style="left:969px;width:80px;">1000094803...</div>
<div class="c r" style="left:1049px;width:80px;">59.00</div>
<div class="c" style="left:1129px;width:80px;"></div>
<div class="c" style="left:1209px;width:80px;">04.05.1992</div>
<div class="c" style="left:1289px;width:132px;">Import Data</div>
<div class="c" style="left:1421px;width:80px;"></div>
<div class="c" style="left:1501px;width:34px;"></div>
</div>
<div class="row alt" style="top:456px">
<div class="c r" style="left:0px;width:80px;">44</div>
<div class="c" style="left:80px;width:80px;">Frýbová, Zd...</div>
<div class="c b" style="left:160px;width:150px;">Mafie po listopadu ane...</div>
<div class="c" style="left:310px;width:80px;">216598</div>
<div class="c" style="left:390px;width:179px;">Oddělení pro dospělé</div>
<div class="c" style="left:569px;width:80px;"></div>
<div class="c" style="left:649px;width:80px;"></div>
<div class="c" style="left:729px;width:80px;">Beletrie</div>
<div class="c" style="left:809px;width:80px;">Koupě</div>
<div class="c" style="left:889px;width:80px;"></div>
<div class="c" style="left:969px;width:80px;">1000058331...</div>
<div class="c r" style="left:1049px;width:80px;">59.00</div>
<div class="c" style="left:1129px;width:80px;"></div>
<div class="c" style="left:1209px;width:80px;">04.05.1992</div>
<div class="c" style="left:1289px;width:132px;">Import Data</div>
<div class="c" style="left:1421px;width:80px;"></div>
<div class="c" style="left:1501px;width:34px;"></div>
</div>
<div class="row" style="top:478px">
<div class="c r" style="left:0px;width:80px;">48</div>
<div class="c" style="left:80px;width:80px;">Frýbová, Zd...</div>
<div class="c b" style="left:160px;width:150px;">Mafie po listopadu ane...</div>
<div class="c" style="left:310px;width:80px;">218627</div>
<div class="c" style="left:390px;width:179px;">Oddělení pro dospělé</div>
<div class="c" style="left:569px;width:80px;"></div>
<div class="c" style="left:649px;width:80px;"></div>
<div class="c" style="left:729px;width:80px;">Beletrie</div>
<div class="c" style="left:809px;width:80px;">Koupě</div>
<div class="c" style="left:889px;width:80px;"></div>
<div class="c" style="left:969px;width:80px;">1000087004...</div>
<div class="c r" style="left:1049px;width:80px;">59.00</div>
<div class="c" style="left:1129px;width:80px;"></div>
<div class="c" style="left:1209px;width:80px;">26.06.1992</div>
<div class="c" style="left:1289px;width:132px;">Import Data</div>
<div class="c" style="left:1421px;width:80px;"></div>
<div class="c" style="left:1501px;width:34px;"></div>
</div>
<div class="row alt" style="top:500px">
<div class="c r" style="left:0px;width:80px;">52</div>
<div class="c" style="left:80px;width:80px;">Hejcman, Pa...</div>
<div class="c b" style="left:160px;width:150px;">Dědicové /</div>
<div class="c" style="left:310px;width:80px;">218883</div>
<div class="c" style="left:390px;width:179px;">Oddělení pro dospělé</div>
<div class="c" style="left:569px;width:80px;"></div>
<div class="c" style="left:649px;width:80px;"></div>
<div class="c" style="left:729px;width:80px;">Beletrie</div>
<div class="c" style="left:809px;width:80px;">Koupě</div>
<div class="c" style="left:889px;width:80px;"></div>
<div class="c" style="left:969px;width:80px;">1000092193...</div>
<div class="c r" style="left:1049px;width:80px;">30.00</div>
<div class="c" style="left:1129px;width:80px;"></div>
<div class="c" style="left:1209px;width:80px;">14.07.1992</div>
<div class="c" style="left:1289px;width:132px;">Import Data</div>
<div class="c" style="left:1421px;width:80px;"></div>
<div class="c" style="left:1501px;width:34px;"></div>
</div>
<div class="row" style="top:522px">
<div class="c r" style="left:0px;width:80px;">53</div>
<div class="c" style="left:80px;width:80px;">Hejcman, Pa...</div>
<div class="c b" style="left:160px;width:150px;">Dědicové /</div>
<div class="c" style="left:310px;width:80px;">218884</div>
<div class="c" style="left:390px;width:179px;">Oddělení pro dospělé</div>
<div class="c" style="left:569px;width:80px;"></div>
<div class="c" style="left:649px;width:80px;"></div>
<div class="c" style="left:729px;width:80px;">Beletrie</div>
<div class="c" style="left:809px;width:80px;">Koupě</div>
<div class="c" style="left:889px;width:80px;"></div>
<div class="c" style="left:969px;width:80px;">1000094803...</div>
<div class="c r" style="left:1049px;width:80px;">30.00</div>
<div class="c" style="left:1129px;width:80px;"></div>
<div class="c" style="left:1209px;width:80px;">14.07.1992</div>
<div class="c" style="left:1289px;width:132px;">Import Data</div>
<div class="c" style="left:1421px;width:80px;"></div>
<div class="c" style="left:1501px;width:34px;"></div>
</div>
<div class="row alt" style="top:544px">
<div class="c r" style="left:0px;width:80px;">54</div>
<div class="c" style="left:80px;width:80px;">Hejcman, Pa...</div>
<div class="c b" style="left:160px;width:150px;">Dědicové /</div>
<div class="c" style="left:310px;width:80px;">218885</div>
<div class="c" style="left:390px;width:179px;">Oddělení pro dospělé</div>
<div class="c" style="left:569px;width:80px;"></div>
<div class="c" style="left:649px;width:80px;"></div>
<div class="c" style="left:729px;width:80px;">Beletrie</div>
<div class="c" style="left:809px;width:80px;">Koupě</div>
<div class="c" style="left:889px;width:80px;"></div>
<div class="c" style="left:969px;width:80px;">1000058331...</div>
<div class="c r" style="left:1049px;width:80px;">30.00</div>
<div class="c" style="left:1129px;width:80px;"></div>
<div class="c" style="left:1209px;width:80px;">14.07.1992</div>
<div class="c" style="left:1289px;width:132px;">Import Data</div>
<div class="c" style="left:1421px;width:80px;"></div>
<div class="c" style="left:1501px;width:34px;"></div>
</div>
<div class="row" style="top:566px">
<div class="c r" style="left:0px;width:80px;">55</div>
<div class="c" style="left:80px;width:80px;">Hejcman, Pa...</div>
<div class="c b" style="left:160px;width:150px;">Dědicové /</div>
<div class="c" style="left:310px;width:80px;">218886</div>
<div class="c" style="left:390px;width:179px;">Oddělení pro dospělé</div>
<div class="c" style="left:569px;width:80px;"></div>
<div class="c" style="left:649px;width:80px;"></div>
<div class="c" style="left:729px;width:80px;">Beletrie</div>
<div class="c" style="left:809px;width:80px;">Koupě</div>
<div class="c" style="left:889px;width:80px;"></div>
<div class="c" style="left:969px;width:80px;">1000060171...</div>
<div class="c r" style="left:1049px;width:80px;">30.00</div>
<div class="c" style="left:1129px;width:80px;"></div>
<div class="c" style="left:1209px;width:80px;">14.07.1992</div>
<div class="c" style="left:1289px;width:132px;">Import Data</div>
<div class="c" style="left:1421px;width:80px;"></div>
<div class="c" style="left:1501px;width:34px;"></div>
</div>
<div class="row alt" style="top:588px">
<div class="c r" style="left:0px;width:80px;">62</div>
<div class="c" style="left:80px;width:80px;">Morávek, Jan</div>
<div class="c b" style="left:160px;width:150px;">Zpáteční voda :</div>
<div class="c" style="left:310px;width:80px;">131582</div>
<div class="c" style="left:390px;width:179px;">Oddělení pro dospělé</div>
<div class="c" style="left:569px;width:80px;"></div>
<div class="c" style="left:649px;width:80px;"></div>
<div class="c" style="left:729px;width:80px;">Beletrie</div>
<div class="c" style="left:809px;width:80px;">0</div>
<div class="c" style="left:889px;width:80px;"></div>
<div class="c" style="left:969px;width:80px;"></div>
<div class="c r" style="left:1049px;width:80px;">30.00</div>
<div class="c" style="left:1129px;width:80px;"></div>
<div class="c" style="left:1209px;width:80px;">06.08.1992</div>
<div class="c" style="left:1289px;width:132px;">Import Data</div>
<div class="c" style="left:1421px;width:80px;"></div>
<div class="c" style="left:1501px;width:34px;"></div>
</div>
<div class="row" style="top:610px">
<div class="c r" style="left:0px;width:80px;">68</div>
<div class="c" style="left:80px;width:80px;">Olbracht, Iv...</div>
<div class="c b" style="left:160px;width:150px;">Ze staré paměti a mou...</div>
<div class="c" style="left:310px;width:80px;">136568</div>
<div class="c" style="left:390px;width:179px;">Oddělení pro dospělé</div>
<div class="c" style="left:569px;width:80px;"></div>
<div class="c" style="left:649px;width:80px;"></div>
<div class="c" style="left:729px;width:80px;">Beletrie</div>
<div class="c" style="left:809px;width:80px;">0</div>
<div class="c" style="left:889px;width:80px;"></div>
<div class="c" style="left:969px;width:80px;"></div>
<div class="c r" style="left:1049px;width:80px;">26.00</div>
<div class="c" style="left:1129px;width:80px;"></div>
<div class="c" style="left:1209px;width:80px;">13.08.1992</div>
<div class="c" style="left:1289px;width:132px;">Import Data</div>
<div class="c" style="left:1421px;width:80px;"></div>
<div class="c" style="left:1501px;width:34px;"></div>
</div>
<div class="row alt" style="top:632px">
<div class="c r" style="left:0px;width:80px;">69</div>
<div class="c" style="left:80px;width:80px;">Preissová, G...</div>
<div class="c b" style="left:160px;width:150px;">Její pastorkyňa /</div>
<div class="c" style="left:310px;width:80px;">140107</div>
<div class="c" style="left:390px;width:179px;">Oddělení pro dospělé</div>
<div class="c" style="left:569px;width:80px;"></div>
<div class="c" style="left:649px;width:80px;"></div>
<div class="c" style="left:729px;width:80px;">Beletrie</div>
<div class="c" style="left:809px;width:80px;">0</div>
<div class="c" style="left:889px;width:80px;"></div>
<div class="c" style="left:969px;width:80px;"></div>
<div class="c r" style="left:1049px;width:80px;">15.00</div>
<div class="c" style="left:1129px;width:80px;"></div>
<div class="c" style="left:1209px;width:80px;">19.08.1992</div>
<div class="c" style="left:1289px;width:132px;">Import Data</div>
<div class="c" style="left:1421px;width:80px;"></div>
<div class="c" style="left:1501px;width:34px;"></div>
</div>
<div class="row" style="top:654px">
<div class="c r" style="left:0px;width:80px;">70</div>
<div class="c" style="left:80px;width:80px;">Reniak, Mari...</div>
<div class="c b" style="left:160px;width:150px;">Sám mezi cizími /</div>
<div class="c" style="left:310px;width:80px;">162259</div>
<div class="c" style="left:390px;width:179px;">Oddělení pro dospělé</div>
<div class="c" style="left:569px;width:80px;"></div>
<div class="c" style="left:649px;width:80px;"></div>
<div class="c" style="left:729px;width:80px;">Beletrie</div>
<div class="c" style="left:809px;width:80px;">0</div>
<div class="c" style="left:889px;width:80px;"></div>
<div class="c" style="left:969px;width:80px;"></div>
<div class="c r" style="left:1049px;width:80px;">14.00</div>
<div class="c" style="left:1129px;width:80px;"></div>
<div class="c" style="left:1209px;width:80px;">24.08.1992</div>
<div class="c" style="left:1289px;width:132px;">Import Data</div>
<div class="c" style="left:1421px;width:80px;"></div>
<div class="c" style="left:1501px;width:34px;"></div>
</div>
<div class="row alt" style="top:676px">
<div class="c r" style="left:0px;width:80px;">72</div>
<div class="c" style="left:80px;width:80px;">Saint-Lauren...</div>
<div class="c b" style="left:160px;width:150px;">Oheň a láska : Román</div>
<div class="c" style="left:310px;width:80px;">112752</div>
<div class="c" style="left:390px;width:179px;">Oddělení pro dospělé</div>
<div class="c" style="left:569px;width:80px;"></div>
<div class="c" style="left:649px;width:80px;"></div>
<div class="c" style="left:729px;width:80px;">Beletrie</div>
<div class="c" style="left:809px;width:80px;">0</div>
<div class="c" style="left:889px;width:80px;"></div>
<div class="c" style="left:969px;width:80px;"></div>
<div class="c r" style="left:1049px;width:80px;">30.00</div>
<div class="c" style="left:1129px;width:80px;"></div>
<div class="c" style="left:1209px;width:80px;">28.08.1992</div>
<div class="c" style="left:1289px;width:132px;">Import Data</div>
<div class="c" style="left:1421px;width:80px;"></div>
<div class="c" style="left:1501px;width:34px;"></div>
</div>
<div class="row" style="top:698px">
<div class="c r" style="left:0px;width:80px;">75</div>
<div class="c" style="left:80px;width:80px;">Sviridov, Ge...</div>
<div class="c b" style="left:160px;width:150px;">Bojové rukavice. Do po...</div>
<div class="c" style="left:310px;width:80px;">174618</div>
<div class="c" style="left:390px;width:179px;">Oddělení pro dospělé</div>
<div class="c" style="left:569px;width:80px;"></div>
<div class="c" style="left:649px;width:80px;"></div>
<div class="c" style="left:729px;width:80px;">Beletrie</div>
<div class="c" style="left:809px;width:80px;">0</div>
<div class="c" style="left:889px;width:80px;"></div>
<div class="c" style="left:969px;width:80px;"></div>
<div class="c r" style="left:1049px;width:80px;">20.00</div>
<div class="c" style="left:1129px;width:80px;"></div>
<div class="c" style="left:1209px;width:80px;">10.09.1992</div>
<div class="c" style="left:1289px;width:132px;">Import Data</div>
<div class="c" style="left:1421px;width:80px;"></div>
<div class="c" style="left:1501px;width:34px;"></div>
</div>
<div class="row alt" style="top:720px">
<div class="c r" style="left:0px;width:80px;">76</div>
<div class="c" style="left:80px;width:80px;">Štěpán, Lud...</div>
<div class="c b" style="left:160px;width:150px;">A jinak se pluje po moři /</div>
<div class="c" style="left:310px;width:80px;">195098</div>
<div class="c" style="left:390px;width:179px;">Oddělení pro dospělé</div>
<div class="c" style="left:569px;width:80px;"></div>
<div class="c" style="left:649px;width:80px;"></div>
<div class="c" style="left:729px;width:80px;">Beletrie</div>
<div class="c" style="left:809px;width:80px;">0</div>
<div class="c" style="left:889px;width:80px;"></div>
<div class="c" style="left:969px;width:80px;"></div>
<div class="c r" style="left:1049px;width:80px;">30.00</div>
<div class="c" style="left:1129px;width:80px;"></div>
<div class="c" style="left:1209px;width:80px;">16.09.1992</div>
<div class="c" style="left:1289px;width:132px;">Import Data</div>
<div class="c" style="left:1421px;width:80px;"></div>
<div class="c" style="left:1501px;width:34px;"></div>
</div>
<div class="row" style="top:742px">
<div class="c r" style="left:0px;width:80px;">77</div>
<div class="c" style="left:80px;width:80px;">Blok, Aleksa...</div>
<div class="c b" style="left:160px;width:150px;">Poslední jamby /</div>
<div class="c" style="left:310px;width:80px;">97871</div>
<div class="c" style="left:390px;width:179px;">Oddělení pro dospělé</div>
<div class="c" style="left:569px;width:80px;"></div>
<div class="c" style="left:649px;width:80px;"></div>
<div class="c" style="left:729px;width:80px;">Beletrie</div>
<div class="c" style="left:809px;width:80px;">0</div>
<div class="c" style="left:889px;width:80px;"></div>
<div class="c" style="left:969px;width:80px;"></div>
<div class="c r" style="left:1049px;width:80px;">9.00</div>
<div class="c" style="left:1129px;width:80px;"></div>
<div class="c" style="left:1209px;width:80px;">21.09.1992</div>
<div class="c" style="left:1289px;width:132px;">Import Data</div>
<div class="c" style="left:1421px;width:80px;"></div>
<div class="c" style="left:1501px;width:34px;"></div>
</div>
<div class="row alt" style="top:764px">
<div class="c r" style="left:0px;width:80px;">78</div>
<div class="c" style="left:80px;width:80px;">Bratršovská,...</div>
<div class="c b" style="left:160px;width:150px;">Chůdy po předcích /</div>
<div class="c" style="left:310px;width:80px;">186442</div>
<div class="c" style="left:390px;width:179px;">Oddělení pro dospělé</div>
<div class="c" style="left:569px;width:80px;"></div>
<div class="c" style="left:649px;width:80px;"></div>
<div class="c" style="left:729px;width:80px;">Beletrie</div>
<div class="c" style="left:809px;width:80px;">0</div>
<div class="c" style="left:889px;width:80px;"></div>
<div class="c" style="left:969px;width:80px;"></div>
<div class="c r" style="left:1049px;width:80px;">11.00</div>
<div class="c" style="left:1129px;width:80px;"></div>
<div class="c" style="left:1209px;width:80px;">23.09.1992</div>
<div class="c" style="left:1289px;width:132px;">Import Data</div>
<div class="c" style="left:1421px;width:80px;"></div>
<div class="c" style="left:1501px;width:34px;"></div>
</div>
<div class="row" style="top:786px">
<div class="c r" style="left:0px;width:80px;">79</div>
<div class="c" style="left:80px;width:80px;">Šabatková, ...</div>
<div class="c b" style="left:160px;width:150px;">Hnízdo ve stráni /</div>
<div class="c" style="left:310px;width:80px;">201725</div>
<div class="c" style="left:390px;width:179px;">Oddělení pro dospělé</div>
<div class="c" style="left:569px;width:80px;"></div>
<div class="c" style="left:649px;width:80px;"></div>
<div class="c" style="left:729px;width:80px;">Beletrie</div>
<div class="c" style="left:809px;width:80px;">0</div>
<div class="c" style="left:889px;width:80px;"></div>
<div class="c" style="left:969px;width:80px;"></div>
<div class="c r" style="left:1049px;width:80px;">18.00</div>
<div class="c" style="left:1129px;width:80px;"></div>
<div class="c" style="left:1209px;width:80px;">15.09.1992</div>
<div class="c" style="left:1289px;width:132px;">Import Data</div>
<div class="c" style="left:1421px;width:80px;"></div>
<div class="c" style="left:1501px;width:34px;"></div>
</div>
<div class="row alt" style="top:808px">
<div class="c r" style="left:0px;width:80px;">80</div>
<div class="c" style="left:80px;width:80px;">Šabatková, ...</div>
<div class="c b" style="left:160px;width:150px;">Hnízdo ve stráni /</div>
<div class="c" style="left:310px;width:80px;">201726</div>
<div class="c" style="left:390px;width:179px;">Oddělení pro dospělé</div>
<div class="c" style="left:569px;width:80px;"></div>
<div class="c" style="left:649px;width:80px;"></div>
<div class="c" style="left:729px;width:80px;">Beletrie</div>
<div class="c" style="left:809px;width:80px;">0</div>
<div class="c" style="left:889px;width:80px;"></div>
<div class="c" style="left:969px;width:80px;"></div>
<div class="c r" style="left:1049px;width:80px;">18.00</div>
<div class="c" style="left:1129px;width:80px;"></div>
<div class="c" style="left:1209px;width:80px;">28.09.1992</div>
<div class="c" style="left:1289px;width:132px;">Import Data</div>
<div class="c" style="left:1421px;width:80px;"></div>
<div class="c" style="left:1501px;width:34px;"></div>
</div>
<div class="row" style="top:830px">
<div class="c r" style="left:0px;width:80px;">81</div>
<div class="c" style="left:80px;width:80px;">Borkovec, P...</div>
<div class="c b" style="left:160px;width:150px;">Prostírání do tichého /</div>
<div class="c" style="left:310px;width:80px;">205474</div>
<div class="c" style="left:390px;width:179px;">Oddělení pro dospělé</div>
<div class="c" style="left:569px;width:80px;"></div>
<div class="c" style="left:649px;width:80px;"></div>
<div class="c" style="left:729px;width:80px;">Beletrie</div>
<div class="c" style="left:809px;width:80px;">0</div>
<div class="c" style="left:889px;width:80px;"></div>
<div class="c" style="left:969px;width:80px;"></div>
<div class="c r" style="left:1049px;width:80px;">7.00</div>
<div class="c" style="left:1129px;width:80px;"></div>
<div class="c" style="left:1209px;width:80px;">06.10.1992</div>
<div class="c" style="left:1289px;width:132px;">Import Data</div>
<div class="c" style="left:1421px;width:80px;"></div>
<div class="c" style="left:1501px;width:34px;"></div>
</div>
<div class="row alt" style="top:852px">
<div class="c r" style="left:0px;width:80px;">83</div>
<div class="c" style="left:80px;width:80px;">Havlíček-Bor...</div>
<div class="c b" style="left:160px;width:150px;">Křest svatého Vladimír...</div>
<div class="c" style="left:310px;width:80px;">181930</div>
<div class="c" style="left:390px;width:179px;">Oddělení pro dospělé</div>
<div class="c" style="left:569px;width:80px;"></div>
<div class="c" style="left:649px;width:80px;"></div>
<div class="c" style="left:729px;width:80px;">Beletrie</div>
<div class="c" style="left:809px;width:80px;">0</div>
<div class="c" style="left:889px;width:80px;"></div>
<div class="c" style="left:969px;width:80px;"></div>
<div class="c r" style="left:1049px;width:80px;">17.00</div>
<div class="c" style="left:1129px;width:80px;"></div>
<div class="c" style="left:1209px;width:80px;">09.10.1992</div>
<div class="c" style="left:1289px;width:132px;">Import Data</div>
<div class="c" style="left:1421px;width:80px;"></div>
<div class="c" style="left:1501px;width:34px;"></div>
</div>
<div class="row" style="top:874px">
<div class="c r" style="left:0px;width:80px;">84</div>
<div class="c" style="left:80px;width:80px;">Havlíček-Bor...</div>
<div class="c b" style="left:160px;width:150px;">Křest svatého Vladimír...</div>
<div class="c" style="left:310px;width:80px;">181929</div>
<div class="c" style="left:390px;width:179px;">Oddělení pro dospělé</div>
<div class="c" style="left:569px;width:80px;"></div>
<div class="c" style="left:649px;width:80px;"></div>
<div class="c" style="left:729px;width:80px;">Beletrie</div>
<div class="c" style="left:809px;width:80px;">0</div>
<div class="c" style="left:889px;width:80px;"></div>
<div class="c" style="left:969px;width:80px;"></div>
<div class="c r" style="left:1049px;width:80px;">17.00</div>
<div class="c" style="left:1129px;width:80px;"></div>
<div class="c" style="left:1209px;width:80px;">13.10.1992</div>
<div class="c" style="left:1289px;width:132px;">Import Data</div>
<div class="c" style="left:1421px;width:80px;"></div>
<div class="c" style="left:1501px;width:34px;"></div>
</div>
<div class="row alt" style="top:896px">
<div class="c r" style="left:0px;width:80px;">89</div>
<div class="c" style="left:80px;width:80px;">Batlička, Ota...</div>
<div class="c b" style="left:160px;width:150px;">Muž v podpalubí /</div>
<div class="c" style="left:310px;width:80px;">220446</div>
<div class="c" style="left:390px;width:179px;">Oddělení pro dospělé</div>
<div class="c" style="left:569px;width:80px;"></div>
<div class="c" style="left:649px;width:80px;"></div>
<div class="c" style="left:729px;width:80px;">Beletrie</div>
<div class="c" style="left:809px;width:80px;">Koupě</div>
<div class="c" style="left:889px;width:80px;"></div>
<div class="c" style="left:969px;width:80px;">1000092193...</div>
<div class="c r" style="left:1049px;width:80px;">50.00</div>
<div class="c" style="left:1129px;width:80px;"></div>
<div class="c" style="left:1209px;width:80px;">15.10.1992</div>
<div class="c" style="left:1289px;width:132px;">Import Data</div>
<div class="c" style="left:1421px;width:80px;"></div>
<div class="c" style="left:1501px;width:34px;"></div>
</div>
<div class="row" style="top:918px">
<div class="c r" style="left:0px;width:80px;">91</div>
<div class="c" style="left:80px;width:80px;"></div>
<div class="c b" style="left:160px;width:150px;">21 detektivů</div>
<div class="c" style="left:310px;width:80px;">220563</div>
<div class="c" style="left:390px;width:179px;">Oddělení pro dospělé</div>
<div class="c" style="left:569px;width:80px;"></div>
<div class="c" style="left:649px;width:80px;"></div>
<div class="c" style="left:729px;width:80px;">Beletrie</div>
<div class="c" style="left:809px;width:80px;">Koupě</div>
<div class="c" style="left:889px;width:80px;"></div>
<div class="c" style="left:969px;width:80px;">1000058331...</div>
<div class="c r" style="left:1049px;width:80px;">73.00</div>
<div class="c" style="left:1129px;width:80px;"></div>
<div class="c" style="left:1209px;width:80px;">26.10.1992</div>
<div class="c" style="left:1289px;width:132px;">Import Data</div>
<div class="c" style="left:1421px;width:80px;"></div>
<div class="c" style="left:1501px;width:34px;"></div>
</div>
<div class="row alt" style="top:940px">
<div class="c r" style="left:0px;width:80px;">93</div>
<div class="c" style="left:80px;width:80px;">Homéros</div>
<div class="c b" style="left:160px;width:150px;">Odysseia /</div>
<div class="c" style="left:310px;width:80px;">55465</div>
<div class="c" style="left:390px;width:179px;">Oddělení pro dospělé</div>
<div class="c" style="left:569px;width:80px;"></div>
<div class="c" style="left:649px;width:80px;"></div>
<div class="c" style="left:729px;width:80px;">Beletrie</div>
<div class="c" style="left:809px;width:80px;">0</div>
<div class="c" style="left:889px;width:80px;"></div>
<div class="c" style="left:969px;width:80px;"></div>
<div class="c r" style="left:1049px;width:80px;">19.00</div>
<div class="c" style="left:1129px;width:80px;"></div>
<div class="c" style="left:1209px;width:80px;">29.10.1992</div>
<div class="c" style="left:1289px;width:132px;">Import Data</div>
<div class="c" style="left:1421px;width:80px;"></div>
<div class="c" style="left:1501px;width:34px;"></div>
</div>
<div class="row" style="top:962px">
<div class="c r" style="left:0px;width:80px;">94</div>
<div class="c" style="left:80px;width:80px;">Kožík, Franti...</div>
<div class="c b" style="left:160px;width:150px;">Stezka věrnosti</div>
<div class="c" style="left:310px;width:80px;">103672</div>
<div class="c" style="left:390px;width:179px;">Knihovna</div>
<div class="c" style="left:569px;width:80px;"></div>
<div class="c" style="left:649px;width:80px;"></div>
<div class="c" style="left:729px;width:80px;">Beletrie</div>
<div class="c" style="left:809px;width:80px;">0</div>
<div class="c" style="left:889px;width:80px;"></div>
<div class="c" style="left:969px;width:80px;"></div>
<div class="c r" style="left:1049px;width:80px;">9.00</div>
<div class="c" style="left:1129px;width:80px;"></div>
<div class="c" style="left:1209px;width:80px;">30.10.1992</div>
<div class="c" style="left:1289px;width:132px;">Import Data</div>
<div class="c" style="left:1421px;width:80px;"></div>
<div class="c" style="left:1501px;width:34px;"></div>
</div>
<div class="a" style="left:1734px;top:82px;width:30px;height:920px;background:#dde7f5;border-left:1px solid #99bbe8"></div>
<div class="idx" style="top:117.0px">A</div>
<div class="idx" style="top:148.8px">B</div>
<div class="idx" style="top:180.6px">C</div>
<div class="idx" style="top:212.4px">D</div>
<div class="idx" style="top:244.2px">E</div>
<div class="idx" style="top:276.0px">F</div>
<div class="idx" style="top:307.8px">G</div>
<div class="idx" style="top:339.6px">H</div>
<div class="idx" style="top:371.4px">Ch</div>
<div class="idx" style="top:403.2px">I</div>
<div class="idx" style="top:435.0px">J</div>
<div class="idx" style="top:466.8px">K</div>
<div class="idx" style="top:498.6px">L</div>
<div class="idx" style="top:530.4px">M</div>
<div class="idx" style="top:562.2px">N</div>
<div class="idx" style="top:594.0px">O</div>
<div class="idx" style="top:625.8px">P</div>
<div class="idx" style="top:657.6px">Q</div>
<div class="idx" style="top:689.4px">R</div>
<div class="idx" style="top:721.2px">S</div>
<div class="idx" style="top:753.0px">T</div>
<div class="idx" style="top:784.8px">U</div>
<div class="idx" style="top:816.6px">V</div>
<div class="idx" style="top:848.4px">W</div>
<div class="idx" style="top:880.2px">X</div>
<div class="idx" style="top:912.0px">Y</div>
<div class="idx" style="top:943.8px">Z</div>
<svg class="a" style="left:1742px;top:86px" width="16" height="22" viewBox="0 0 16 22"><rect x="1.5" y="1" width="13" height="3" fill="#3d64a0"/><path d="M2 13.5l6-6 6 6M2 20.5l6-6 6 6" fill="none" stroke="#3d64a0" stroke-width="3.2"/></svg>
<svg class="a" style="left:1742px;top:975px" width="16" height="22" viewBox="0 0 16 22"><path d="M2 1.5l6 6 6-6M2 8.5l6 6 6-6" fill="none" stroke="#3d64a0" stroke-width="3.2"/><rect x="1.5" y="18" width="13" height="3" fill="#3d64a0"/></svg>
<div class="a" style="left:200px;top:984px;width:1534px;height:19px;background:#f0f0f0"></div>
<svg class="a" style="left:204px;top:989px" width="8" height="9" viewBox="0 0 8 9"><path d="M6 0.5v8L1.5 4.5z" fill="#a3a3a3"/></svg>
<div class="a" style="left:217px;top:987px;width:1116px;height:13px;background:#c2c2c2"></div>
<svg class="a" style="left:1722px;top:989px" width="8" height="9" viewBox="0 0 8 9"><path d="M2 0.5v8L6.5 4.5z" fill="#505050"/></svg>
<div class="a" style="left:200px;top:1003px;width:1564px;height:26px;background:linear-gradient(#d9e5f4,#cfdef2 80%,#cadbf1)"></div>
<div class="t" style="left:204px;top:1009px">Zobrazuji 1 - 41 z 1780</div>
<div class="btn" style="top:65px"><svg width="16" height="16" viewBox="0 0 16 16"><rect x="0.5" y="1.5" width="13" height="11" fill="#fff" stroke="#5f8fd1"/><rect x="0.5" y="1.5" width="13" height="2.5" fill="#9cc0ee" stroke="#5f8fd1"/><path d="M5 14l1-3 7-7 2 2-7 7z" fill="#f3d35a" stroke="#c9892a" stroke-width="0.8"/></svg><div class="bt">Upravit</div></div>
<div class="btn" style="top:92px"><svg width="16" height="16" viewBox="0 0 16 16"><circle cx="8" cy="8" r="7" fill="#e0554f" stroke="#c7423d"/><circle cx="8" cy="8" r="5" fill="#ef7d76"/><path d="M5.5 5.5l5 5M10.5 5.5l-5 5" stroke="#fff" stroke-width="1.8"/></svg><div class="bt">Odstranit</div></div>
<div class="btn" style="top:119px"><svg width="16" height="16" viewBox="0 0 16 16"><path d="M1 1h6l2 2v9H1z" fill="#e8f1fc" stroke="#5f8fd1"/><path d="M6 5h6l2 2v8H6z" fill="#d6e6fb" stroke="#5f8fd1"/></svg><div class="bt">Duplikovat</div></div>
<div class="btn" style="top:146px"><svg width="16" height="16" viewBox="0 0 16 16"><path d="M4.5 11.5A5.2 5.2 0 1 1 10 12.6" fill="none" stroke="#5cb15a" stroke-width="2.8"/><path d="M8.5 9.5A1.8 1.8 0 1 1 9 5.5" fill="none" stroke="#fff" stroke-width="0"/><path d="M1.5 9.5L7.5 9.8 4.8 15z" fill="#4a9f48"/></svg><div class="bt">Obnovit</div></div>
<div class="btn" style="top:173px"><svg width="16" height="16" viewBox="0 0 16 16"><path d="M8 1L15.5 14.5H0.5z" fill="#f7d862" stroke="#d88b16" stroke-width="1"/><path d="M8 5v5" stroke="#b97a10" stroke-width="1.6"/><circle cx="8" cy="12" r="0.9" fill="#b97a10"/></svg><div class="bt">Okamžitý odpis</div></div>
<div class="btn" style="top:200px"><svg width="16" height="16" viewBox="0 0 16 16"><path d="M8 1L15.5 14.5H0.5z" fill="#f7d862" stroke="#d88b16" stroke-width="1"/><path d="M8 5v5" stroke="#b97a10" stroke-width="1.6"/><circle cx="8" cy="12" r="0.9" fill="#b97a10"/></svg><div class="bt">Návrh na odpis</div></div>
<div class="btn" style="top:227px"><svg width="16" height="16" viewBox="0 0 16 16"><path d="M8 1L15.5 14.5H0.5z" fill="#f7d862" stroke="#d88b16" stroke-width="1"/><path d="M8 5v5" stroke="#b97a10" stroke-width="1.6"/><circle cx="8" cy="12" r="0.9" fill="#b97a10"/></svg><div class="bt">Odpisové seznamy</div></div>
<div class="btn" style="top:254px"><svg width="16" height="16" viewBox="0 0 16 16"><rect x="1.5" y="1.5" width="13" height="13" fill="#fff" stroke="#4a78b6"/><rect x="3" y="3" width="10" height="2.5" fill="#6d95cd"/><rect x="3" y="7" width="3" height="6" fill="#4a78b6"/><rect x="7" y="7" width="6" height="6" fill="#5dab4f"/></svg><div class="bt">Upravit dialog</div></div>
<div class="btn" style="top:281px"><svg width="16" height="16" viewBox="0 0 16 16"><path d="M3 1h11l-2 14H1z" fill="#cfe1f8" stroke="#4a78b6"/><path d="M5 5l-2 3 2 3M9 5l2 3-2 3" fill="none" stroke="#3f8de0" stroke-width="1.6"/></svg><div class="bt">Zobrazit lístek</div></div>
<div class="btn" style="top:308px;height:38px;background:linear-gradient(#f6f6f6 0,#f0f0f0 11px,#dcdcdc 12px,#e6e6e6 100%)"><div class="bt" style="padding-left:0;top:4px">Výstupy</div><svg class="a" style="left:64px;top:26px" width="7" height="4" viewBox="0 0 7 4"><path d="M0 0h7L3.5 4z" fill="#000"/></svg></div>
<div class="btn" style="top:349px;height:38px;background:linear-gradient(#f6f6f6 0,#f0f0f0 11px,#dcdcdc 12px,#e6e6e6 100%)"><div class="bt" style="padding-left:0;top:4px">Další akce</div><svg class="a" style="left:64px;top:26px" width="7" height="4" viewBox="0 0 7 4"><path d="M0 0h7L3.5 4z" fill="#000"/></svg></div>
<div class="btn" style="top:971px"><svg width="16" height="16" viewBox="0 0 16 16"><circle cx="11" cy="5" r="4.2" fill="#f3c543" stroke="#c48a10" stroke-width="1"/><circle cx="11.5" cy="4.5" r="1.2" fill="#fff6c8"/><path d="M8 8L1.5 14.5l1.5 1 1-1 1 1 1.2-1.2-1-1 3.5-3.5" fill="#f3c543" stroke="#c48a10" stroke-width="1"/></svg><div class="bt">Zobrazit hierarchicky</div></div>
<div class="btn" style="top:998px;border-color:#d6d6d6;background:linear-gradient(#f8f8f8 0,#f3f3f3 11px,#e6e6e6 12px,#ebebeb 100%)"><svg width="16" height="16" viewBox="0 0 16 16"><circle cx="8" cy="8" r="7" fill="#f4a6a3" stroke="#e88"/><rect x="4" y="6.8" width="8" height="2.4" fill="#fff"/></svg><div class="bt" style="color:#a8a8a8">Moje zobrazení</div></div>
<div class="a" style="left:0;top:1030px;width:1918px;height:27px;background:#dfe8f6"></div>
<div class="a" style="left:0;top:1057px;width:1918px;height:1px;background:#2a2d33"></div>
<div class="a" style="left:-3px;top:1030px;width:44px;height:26px;border:1px solid #c3c3c3;border-radius:3px;background:linear-gradient(#f4f4f4 0,#ececec 12px,#dadada 13px,#e0e0e0 100%)"></div>
<svg class="a" style="left:3px;top:1036px" width="16" height="14" viewBox="0 0 16 14"><path d="M8 0.8L15.3 13.3H0.7z" fill="#f7d862" stroke="#d88b16" stroke-width="1"/><path d="M8 4.5v4.5" stroke="#b97a10" stroke-width="1.6"/><circle cx="8" cy="11" r="0.9" fill="#b97a10"/></svg>
<div class="t" style="left:24px;top:1037px">! 1</div>
<svg class="a" style="left:43px;top:1038px" width="11" height="11" viewBox="0 0 11 11"><circle cx="5.5" cy="5.5" r="5.2" fill="#2d2f8f"/><rect x="4.6" y="4.4" width="1.8" height="4.6" fill="#dfe3f7"/><circle cx="5.5" cy="2.8" r="0.9" fill="#dfe3f7"/></svg>
<div class="t" style="left:63px;top:1037px;font-size:12px">v3.9.1 - <b style="letter-spacing:0.28px">Testovací knihovna</b> (Naposledy -)</div>
<div class="a" style="left:1738px;top:1031px;width:177px;height:24px;border:1px solid #bcbcbc;border-radius:3px;background:linear-gradient(#f6f6f6 0,#f0f0f0 11px,#dcdcdc 12px,#e2e2e2 100%)"></div>
<svg class="a" style="left:1743px;top:1036px" width="17" height="14" viewBox="0 0 17 14"><rect x="0.5" y="0.5" width="15" height="8" rx="2" fill="#7b9fd6"/><path d="M2 8l2 5 3-5z" fill="#7b9fd6"/></svg>
<div class="t" style="left:1802px;top:1036px">Šimeček Jan</div>
<svg class="a" style="left:1904px;top:1041px" width="7" height="4" viewBox="0 0 7 4"><path d="M0 0h7L3.5 4z" fill="#000"/></svg>
<div class="a" style="left:1723px;top:387px;width:195px;height:174px;background:#f0f0f0;border:1px solid #718bb7;box-shadow:2px 2px 3px rgba(0,0,0,0.15)"></div>
<div class="a" style="left:1748px;top:388px;width:2px;height:172px;border-left:1px solid #e0e0e0;border-right:1px solid #fff"></div>
<div class="mico" style="top:395px"><svg width="16" height="16" viewBox="0 0 16 16"><rect x="0.5" y="1.5" width="13" height="11" fill="#fff" stroke="#5f8fd1"/><rect x="0.5" y="1.5" width="13" height="2.5" fill="#9cc0ee" stroke="#5f8fd1"/><path d="M5 14l1-3 7-7 2 2-7 7z" fill="#f3d35a" stroke="#c9892a" stroke-width="0.8"/></svg></div><div class="mi" style="top:396px">Upravit dílo</div>
<div class="mico" style="top:419px"><svg width="16" height="16" viewBox="0 0 16 16"><path d="M8 0.5l4 4H9.5v3l4 4V15h-3v-2.5L8 10l-2.5 2.5V15h-3v-3.5l4-4v-3H4z" fill="#5fb85c" stroke="#2f7d2f" stroke-width="0.8"/></svg></div><div class="mi" style="top:420px">Najít a upravit</div>
<div class="mico" style="top:443px"><svg width="16" height="16" viewBox="0 0 16 16"><path d="M8 0.5l4 4H9.5v3l4 4V15h-3v-2.5L8 10l-2.5 2.5V15h-3v-3.5l4-4v-3H4z" fill="#5fb85c" stroke="#2f7d2f" stroke-width="0.8"/></svg></div><div class="mi" style="top:444px">Načíst a upravit</div>
<div class="mico" style="top:467px"><svg width="16" height="16" viewBox="0 0 16 16"><path d="M4 8.2L17 10.2V13.6L10.4 15 4 11z" fill="#3f9f1f"/><path d="M10.4 11.4L16.6 10.4V13.4L10.4 14.6z" fill="#e4f6d2"/><path d="M0.8 4L15.2 5.6V9.2L8 10.6 0.8 7z" fill="#e2620d"/><path d="M8 7.6L15 6.6V9.4L8 10.5z" fill="#fde4d0"/><path d="M0.8 0.8L9 0.6 16.2 3V5.4L8.6 7.8 0.8 3.8z" fill="#1b62dc"/><path d="M8.6 5.2L16 4V6L8.6 7.6z" fill="#c6ddff"/><path d="M0.8 0.8L8.6 5.2V7.8L0.8 3.8z" fill="#0f46a8"/></svg></div><div class="mi" style="top:468px">Přesunout svazek</div>
<div class="a" style="left:1726px;top:486px;width:189px;height:24px;border:1px solid #a8c9f0;border-radius:1px;background:linear-gradient(#eaf2fd 0,#e6effb 9px,#d9e7f8 10px,#dce9f9 100%)"></div>
<div class="mico" style="top:491px"><svg width="16" height="16" viewBox="0 0 16 16"><path d="M13.53 7.12 L15.46 7.24 L15.46 8.76 L13.53 8.88 L12.53 11.29 L13.82 12.74 L12.74 13.82 L11.29 12.53 L8.88 13.53 L8.76 15.46 L7.24 15.46 L7.12 13.53 L4.71 12.53 L3.26 13.82 L2.18 12.74 L3.47 11.29 L2.47 8.88 L0.54 8.76 L0.54 7.24 L2.47 7.12 L3.47 4.71 L2.18 3.26 L3.26 2.18 L4.71 3.47 L7.12 2.47 L7.24 0.54 L8.76 0.54 L8.88 2.47 L11.29 3.47 L12.74 2.18 L13.82 3.26 L12.53 4.71z" fill="#c4c4c4" stroke="#8f8f8f" stroke-width="0.8" stroke-linejoin="round"/><circle cx="8" cy="8" r="2.6" fill="#d9e8f8" stroke="#9a9a9a" stroke-width="0.8"/></svg></div><div class="mi" style="top:492px">Oprava fondu</div>
<div class="mico" style="top:515px"><svg width="16" height="16" viewBox="0 0 16 16"><path d="M0.5 8L6 3.5V6.5h9.5v3H6v3z" fill="#6dbf66" stroke="#2f7d2f" stroke-width="0.7"/></svg></div><div class="mi" style="top:516px">Vrátit do nadřízené knihovny</div>
<div class="mico" style="top:539px"><svg width="16" height="16" viewBox="0 0 16 16"><path d="M4.5 11.5A5.2 5.2 0 1 1 10 12.6" fill="none" stroke="#5cb15a" stroke-width="2.8"/><path d="M8.5 9.5A1.8 1.8 0 1 1 9 5.5" fill="none" stroke="#fff" stroke-width="0"/><path d="M1.5 9.5L7.5 9.8 4.8 15z" fill="#4a9f48"/></svg></div><div class="mi" style="top:540px">Reindexovat dílo</div>
<svg class="a" style="left:1560px;top:440px;mix-blend-mode:multiply" width="170" height="105" viewBox="0 0 170 105"><polygon points="11.0,45.0 29.0,45.0 29.0,46.0 40.0,46.5 60.0,48.0 80.0,49.5 102.0,50.5 128.0,50.5 123.0,49.0 119.0,45.7 112.0,39.7 109.0,36.7 101.0,29.3 100.0,25.8 100.0,10.0 107.0,10.0 109.0,14.0 118.0,22.0 125.0,29.0 134.0,35.0 141.0,39.0 149.0,45.0 149.0,50.0 155.0,50.0 155.0,66.0 149.0,66.0 145.0,68.5 138.0,73.5 130.0,78.5 121.0,81.0 110.0,89.5 104.0,95.5 104.0,96.0 98.0,96.0 98.0,77.0 102.0,73.5 107.0,69.5 110.0,68.3 101.0,68.0 71.5,67.0 58.5,65.0 35.5,63.5 15.0,61.5 11.0,60.5" fill="#ffff00" shape-rendering="crispEdges"/></svg>
</body></html>
